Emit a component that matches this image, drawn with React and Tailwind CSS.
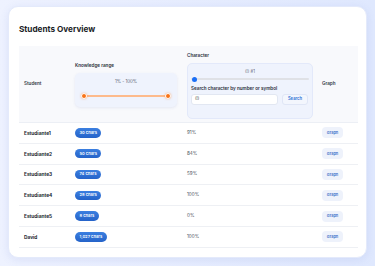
export default function App() {
  const rows = [
    ["Estudiante1", "30 chars", "91%"],
    ["Estudiante2", "50 chars", "84%"],
    ["Estudiante3", "74 chars", "59%"],
    ["Estudiante4", "28 chars", "100%"],
    ["Estudiante5", "8 chars", "0%"],
    ["David", "1,027 chars", "100%"],
  ];
  return (
    <div
      className="w-[375px] h-[266px] overflow-hidden bg-gradient-to-r from-[#eef2ff] to-[#dfe8fe] pt-[6px] pl-[8px]"
      style={{ fontFamily: "Inter, 'Noto Sans', sans-serif" }}
    >
      <div className="w-[359px] h-[252px] bg-white rounded-[10px] shadow-[0_2px_8px_rgba(80,110,200,0.12)] border border-[#e4eafb] px-[10px] pt-[17px]">
        <h1 className="text-[8.2px] leading-[11px] font-bold text-[#1a1d26]">Students Overview</h1>
        <div className="mt-[11px] w-[339px]">
          <div className="grid grid-cols-[56px_112px_135px_36px] items-center h-[77px] bg-[#f8f9fc] border-b border-[#eceff5]">
            <div className="pl-[5px] text-[4.6px] leading-[6px] font-semibold text-[#333a47]">Student</div>
            <div className="flex flex-col pt-[2px]">
              <div className="text-[4.6px] leading-[6px] font-semibold text-[#2a2f3a]">Knowledge range</div>
              <div className="mt-[4px] w-[102px] h-[34px] rounded-[5px] bg-[#eff3fd] shadow-[0_1px_3px_rgba(60,80,160,0.1)] flex flex-col items-center pt-[6px]">
                <div className="text-[4.4px] leading-[6px] text-[#5b6270]">1% - 100%</div>
                <div className="relative mt-[8px] w-[84px] h-[6px] flex items-center">
                  <div className="absolute left-0 right-0 h-[1.5px] bg-[#fdba8c] rounded-full" />
                  <div className="absolute left-[-3px] w-[6px] h-[6px] rounded-full bg-[#f97316] border border-white shadow-[0_0_2px_rgba(249,115,22,0.5)]" />
                  <div className="absolute right-[-3px] w-[6px] h-[6px] rounded-full bg-[#f97316] border border-white shadow-[0_0_2px_rgba(249,115,22,0.5)]" />
                </div>
              </div>
            </div>
            <div className="flex flex-col pt-[3px]">
              <div className="text-[4.6px] leading-[6px] font-semibold text-[#2a2f3a]">Character</div>
              <div className="mt-[4px] w-[126px] h-[56px] rounded-[5px] bg-[#eff3fd] border border-[#e3e9fa] px-[3px] pt-[5px]">
                <div className="text-center text-[4.2px] leading-[6px] text-[#5b6270]">(!) #1</div>
                <div className="relative mt-[2px] h-[5px] flex items-center">
                  <div className="absolute left-0 right-0 h-[1.5px] bg-[#dfe1e6] rounded-full" />
                  <div className="absolute left-[1px] w-[5px] h-[5px] rounded-full bg-[#1a6ef5]" />
                </div>
                <div className="mt-[3px] text-[4.6px] leading-[7px] font-semibold text-[#2a2f3a]">Search character by number or symbol</div>
                <div className="mt-[2px] flex gap-[4px]">
                  <div className="w-[87px] h-[11px] bg-white rounded-[3px] border border-[#e2e7f2] flex items-center pl-[3px] text-[4.2px] leading-none text-[#333]">(!)</div>
                  <div className="w-[26px] h-[11px] rounded-[3px] bg-[#f3f6fd] border border-[#e0e6f6] flex items-center justify-center text-[4.2px] leading-none font-semibold text-[#2d6fd6]">Search</div>
                </div>
              </div>
            </div>
            <div className="text-[4.6px] leading-[6px] font-semibold text-[#333a47]">Graph</div>
          </div>
          {rows.map(([n, c, p]) => (
            <div key={n} className="grid grid-cols-[56px_112px_135px_36px] items-center h-[20.8px] border-b border-[#eef0f4]">
              <div className="pl-[5px] text-[4.8px] leading-[6px] font-bold text-[#252a33]">{n}</div>
              <div className="flex items-center">
                <span className="inline-flex items-center h-[9.5px] px-[4.5px] rounded-full bg-gradient-to-b from-[#3b7fe0] to-[#2563c9] text-white text-[4.1px] leading-none font-semibold">{c}</span>
              </div>
              <div className="text-[4.6px] leading-[6px] text-[#4b515c]">{p}</div>
              <div className="flex items-center">
                <span className="inline-flex items-center justify-center w-[21px] h-[11px] rounded-[4px] bg-[#eef2fb] text-[3.9px] leading-none font-semibold text-[#3a6fc9]">Graph</span>
              </div>
            </div>
          ))}
        </div>
      </div>
    </div>
  );
}
